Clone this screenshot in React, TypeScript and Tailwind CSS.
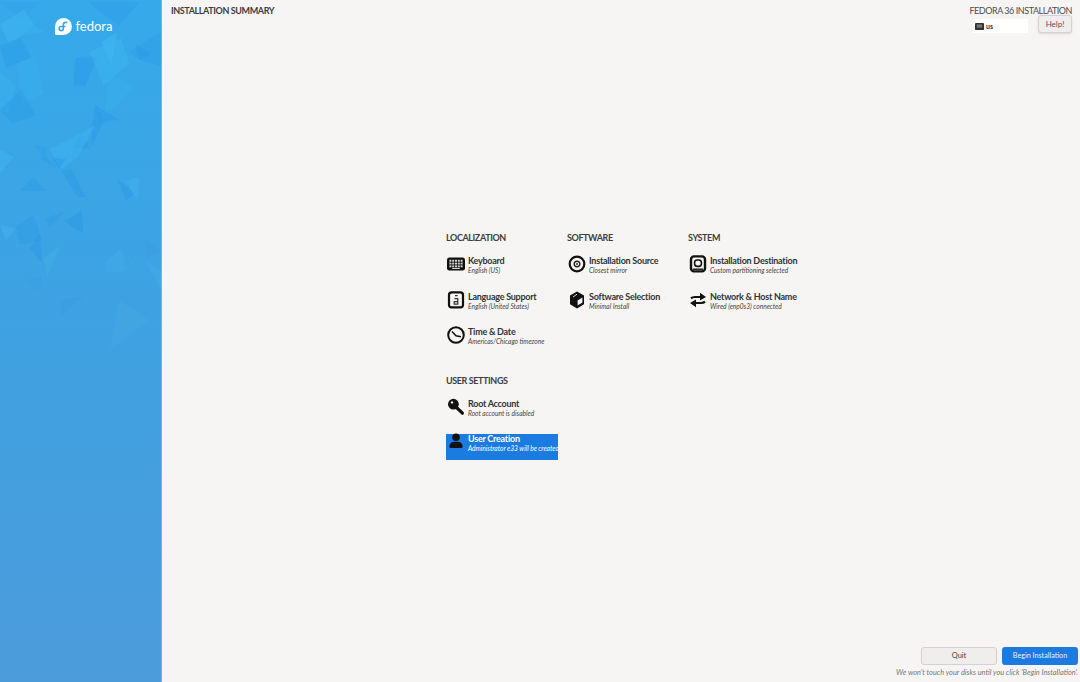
const font = "font-['Lato','Noto_Sans',sans-serif]";

// low-poly pattern of the sidebar: [points, fill]
const polys: [string, string][] = [
  ["0,0 40,0 22,18", "#35a3e8"],
  ["88,0 140,0 120,24", "#2f9fe8"],
  ["0,22 24,8 34,22 10,44", "#3fb6ef"],
  ["0,44 20,36 32,56 6,66", "#2b9de8"],
  ["26,18 44,30 12,36", "#3ab0ee"],
  ["76,56 98,56 86,84 74,84", "#2a9bea"],
  ["90,50 122,36 130,62 104,84", "#3cb4ef"],
  ["130,50 162,30 162,64 140,58", "#2f9fe6"],
  ["136,42 152,52 140,58", "#2c9ae6"],
  ["0,70 16,84 8,112 0,108", "#3ab1ee"],
  ["16,62 36,54 44,92 22,102", "#39aeed"],
  ["0,108 22,88 36,114 12,122", "#2d9fe8"],
  ["102,40 118,30 112,64", "#42b8f0"],
  ["110,72 136,84 104,118", "#39aeed"],
  ["96,104 120,118 100,122", "#2b9de8"],
  ["82,130 90,147 74,147", "#2b99e8"],
  ["96,103 104,120 92,146 92,128", "#2d9be8"],
  ["50,148 96,124 78,156 62,168", "#3cb4ef"],
  ["34,144 48,146 42,158 58,168", "#2f9ee8"],
  ["52,156 66,158 60,168", "#2a9ae6"],
  ["0,148 14,156 0,172", "#3eb4ee"],
  ["62,170 78,196 86,196 72,168", "#2d9be6"],
  ["20,190 34,176 46,190", "#2f9fe8"],
  ["118,178 135,192 127,200", "#2e99e4"],
  ["126,180 139,200 140,176", "#42b2ec"],
  ["46,218 66,210 50,226", "#2f9de4"],
  ["66,220 82,210 84,232 72,226", "#2d99e2"],
  ["16,226 34,214 42,240 20,244", "#309ce4"],
  ["0,224 16,228 6,240", "#43b2ea"],
  ["30,248 40,232 42,262", "#2f99e2"],
  ["44,258 60,246 48,276", "#42aee8"],
  ["130,262 142,250 130,270", "#3fa8e4"],
  ["106,262 122,248 126,270 108,272", "#42ace6"],
  ["146,238 162,250 148,258", "#3a9fe0"],
  ["146,260 162,270 162,290", "#45ace4"],
  ["62,300 84,296 62,316", "#3a9de0"],
  ["24,280 42,276 40,292", "#3d9fe0"],
  ["120,300 150,320 110,350", "#45a5e0"],
];

function KeyboardIcon() {
  const keys = [3.4, 6.2, 9, 11.8, 14.6];
  return (
    <svg viewBox="0 0 20 20" className="w-5 h-5 shrink-0">
      <rect x="1" y="3.6" width="18" height="13" rx="2.4" fill="#111" />
      {[5.8, 8.6, 11.4].map((y) =>
        keys.map((x) => <rect key={`${x}-${y}`} x={x} y={y} width="2" height="1.9" fill="#d8d7d6" />)
      )}
      <rect x="6.2" y="14" width="7.6" height="1" fill="#d8d7d6" />
    </svg>
  );
}

function LanguageIcon() {
  return (
    <svg viewBox="0 0 20 20" className="w-5 h-5 shrink-0">
      <rect x="3" y="2.4" width="14" height="15" rx="2.6" fill="none" stroke="#111" strokeWidth="2.2" />
      <path d="M8.4 8.6h3.4v5.6H8.2v-2.6h3.6M9 5.6h2.6" fill="none" stroke="#333" strokeWidth="1.2" />
    </svg>
  );
}

function ClockIcon() {
  return (
    <svg viewBox="0 0 20 20" className="w-5 h-5 shrink-0">
      <circle cx="10" cy="10" r="7.8" fill="none" stroke="#111" strokeWidth="2" />
      <path d="M6 6.5 10 10.8 15 11.8" fill="none" stroke="#111" strokeWidth="1.5" />
    </svg>
  );
}

function DiscIcon() {
  return (
    <svg viewBox="0 0 20 20" className="w-5 h-5 shrink-0">
      <circle cx="10" cy="10" r="7.3" fill="none" stroke="#111" strokeWidth="2.2" />
      <circle cx="10" cy="10" r="2.8" fill="none" stroke="#222" strokeWidth="1.4" />
      <circle cx="10" cy="10" r="0.9" fill="#222" />
    </svg>
  );
}

function CubeIcon() {
  return (
    <svg viewBox="0 0 20 20" className="w-5 h-5 shrink-0">
      <path d="M10 1.5 17 5.4V14.2L10 18.5 3 14.2V5.4Z" fill="#111" />
      <path d="M10.6 10.4 15.4 7.4V12.6L10.6 15.6Z" fill="#f6f5f4" />
      <path d="M6 7 10 4.2" stroke="#f6f5f4" strokeWidth="0.9" />
    </svg>
  );
}

function DiskIcon() {
  return (
    <svg viewBox="0 0 20 20" className="w-5 h-5 shrink-0">
      <rect x="3" y="2.4" width="14" height="15" rx="3" fill="none" stroke="#111" strokeWidth="2.4" />
      <rect x="6.6" y="6" width="6.8" height="6.4" rx="2.6" fill="none" stroke="#111" strokeWidth="1.6" />
      <path d="M5 15.2h10" stroke="#111" strokeWidth="1.4" />
    </svg>
  );
}

function NetworkIcon() {
  return (
    <svg viewBox="0 0 20 20" className="w-5 h-5 shrink-0">
      <path d="M3 8.4C4 7.4 5 7 7 7H13" fill="none" stroke="#111" strokeWidth="2.2" />
      <path d="M12 2.8 18 7 12 10.6Z" fill="#111" />
      <path d="M17 11.6C16 12.6 15 13 13 13H7" fill="none" stroke="#111" strokeWidth="2.2" />
      <path d="M8 9.4 2 13 8 17.2Z" fill="#111" />
    </svg>
  );
}

function KeyIcon() {
  return (
    <svg viewBox="0 0 20 20" className="w-5 h-5 shrink-0">
      <circle cx="7.4" cy="7.2" r="5.4" fill="#111" />
      <circle cx="6" cy="5.4" r="1.2" fill="#f6f5f4" />
      <path d="M10 10 16.4 16.2" stroke="#111" strokeWidth="3.2" strokeLinecap="round" />
    </svg>
  );
}

function UserIcon() {
  return (
    <svg viewBox="0 0 20 20" className="w-5 h-5 shrink-0">
      <circle cx="10" cy="5.2" r="3.8" fill="#111" />
      <path d="M3.4 14.6c0-3.6 2.6-4.8 6.6-4.8s6.6 1.2 6.6 4.8c0 1-.6 1.4-1.4 1.4H4.8c-.8 0-1.4-.4-1.4-1.4Z" fill="#111" />
    </svg>
  );
}

function Spoke(props: { icon: React.ReactNode; title: string; status: string; selected?: boolean }) {
  return (
    <div className={`flex gap-[2px] w-[112px] h-[26px] items-start whitespace-nowrap ${props.selected ? "bg-[#1c7be0] text-white" : "text-[#2e3436]"}`}>
      <div className="-mt-0.5">{props.icon}</div>
      <div>
        <div className="text-[9px] leading-[10px] font-bold tracking-[-0.25px]">{props.title}</div>
        <div className={`text-[6.6px] leading-[8px] italic ${props.selected ? "text-white" : "text-[#444]"}`}>{props.status}</div>
      </div>
    </div>
  );
}

function Heading({ children }: { children: string }) {
  return <div className="text-[9px] leading-[12px] font-bold tracking-[-0.4px] text-[#3a3d40] h-[12px] mb-[12px]">{children}</div>;
}

export default function App() {
  return (
    <div className={`flex w-[1080px] h-[682px] overflow-hidden bg-[#f6f5f4] ${font}`}>
      <aside className="relative w-[162px] shrink-0 bg-gradient-to-b from-[#35a9ea] via-[#3ea2e2] via-45% to-[#4b9bda] border-r border-r-[#6db8ea] flex justify-center">
        <svg viewBox="0 0 162 682" className="absolute inset-0 w-[161px] h-[682px]">
          {polys.map(([points, fill]) => (
            <polygon key={points} points={points} fill={fill} opacity="0.55" />
          ))}
        </svg>
        <div className="relative flex items-center gap-1 h-[17px] mt-[18px] pl-[6px] text-white">
          <svg viewBox="0 0 18 18" className="w-[17px] h-[17px] shrink-0">
            <path d="M9 0a9 9 0 0 1 0 18H1.4A1.4 1.4 0 0 1 0 16.6V9a9 9 0 0 1 9-9Z" fill="#fff" />
            <path d="M13 4.6h-1.6A2.6 2.6 0 0 0 8.8 7.2v4a2.2 2.2 0 1 1-2.2-2.2H11" fill="none" stroke="#36a7ea" strokeWidth="1.7" />
          </svg>
          <span className="text-[13px] leading-[17px] font-['Lato',sans-serif]">fedora</span>
        </div>
      </aside>
      <main className="flex-1 flex flex-col min-w-0">
        <header className="flex justify-between pl-[9px] pr-2 pt-[5px] h-[36px]">
          <div className="text-[9px] leading-[12px] font-bold tracking-[-0.4px] text-[#3a3d40]">INSTALLATION SUMMARY</div>
          <div className="flex flex-col items-end">
            <div className="text-[9px] leading-[12px] tracking-[-0.45px] text-[#4a4c4f]">FEDORA 36 INSTALLATION</div>
            <div className="flex items-start gap-[10px] -mt-0.5">
              <div className="w-[55px] h-[14px] mt-1 bg-white flex items-center gap-[2px] pl-0.5">
                <svg viewBox="0 0 10 10" className="w-[9px] h-[9px]">
                  <rect y="1" width="10" height="8" rx="1" fill="#333" />
                  <path d="M2 3.5h6M2 5.5h6" stroke="#ccc" strokeWidth="0.8" />
                </svg>
                <span className="text-[7px] font-bold text-[#333]">us</span>
              </div>
              <button className="w-[34px] h-[18px] rounded-[3px] border border-[#d6d1cd] bg-[#f0eeec] text-[8px] text-[#555] shadow-sm">Help!</button>
            </div>
          </div>
        </header>
        <div className="ml-[284px] mt-[196px] flex flex-col">
          <div className="grid grid-cols-[121px_121px_121px]">
            <div className="flex flex-col">
              <Heading>LOCALIZATION</Heading>
              <div className="flex flex-col gap-[9.5px]">
                <Spoke icon={<KeyboardIcon />} title="Keyboard" status="English (US)" />
                <Spoke icon={<LanguageIcon />} title="Language Support" status="English (United States)" />
                <Spoke icon={<ClockIcon />} title="Time & Date" status="Americas/Chicago timezone" />
              </div>
            </div>
            <div className="flex flex-col">
              <Heading>SOFTWARE</Heading>
              <div className="flex flex-col gap-[9.5px]">
                <Spoke icon={<DiscIcon />} title="Installation Source" status="Closest mirror" />
                <Spoke icon={<CubeIcon />} title="Software Selection" status="Minimal Install" />
              </div>
            </div>
            <div className="flex flex-col">
              <Heading>SYSTEM</Heading>
              <div className="flex flex-col gap-[9.5px]">
                <Spoke icon={<DiskIcon />} title="Installation Destination" status="Custom partitioning selected" />
                <Spoke icon={<NetworkIcon />} title="Network & Host Name" status="Wired (enp0s3) connected" />
              </div>
            </div>
          </div>
          <div className="mt-[21.5px] flex flex-col">
            <Heading>USER SETTINGS</Heading>
            <div className="flex flex-col gap-[9.5px]">
              <Spoke icon={<KeyIcon />} title="Root Account" status="Root account is disabled" />
              <Spoke icon={<UserIcon />} title="User Creation" status="Administrator e33 will be created" selected />
            </div>
          </div>
        </div>
        <footer className="mt-auto flex flex-col items-end pr-[2px] pb-[3px]">
          <div className="flex gap-[5px]">
            <button className="w-[76px] h-[18px] rounded-[3px] border border-[#d6d1cd] bg-[#f0eeec] text-[7.5px] text-[#444]">Quit</button>
            <button className="w-[76px] h-[18px] rounded-[3px] bg-[#1c7be0] text-[7.2px] text-[#e8f1fb]">Begin Installation</button>
          </div>
          <div className="mt-[2px] text-[7.4px] leading-[12px] italic text-[#777]">We won't touch your disks until you click 'Begin Installation'.</div>
        </footer>
      </main>
    </div>
  );
}
